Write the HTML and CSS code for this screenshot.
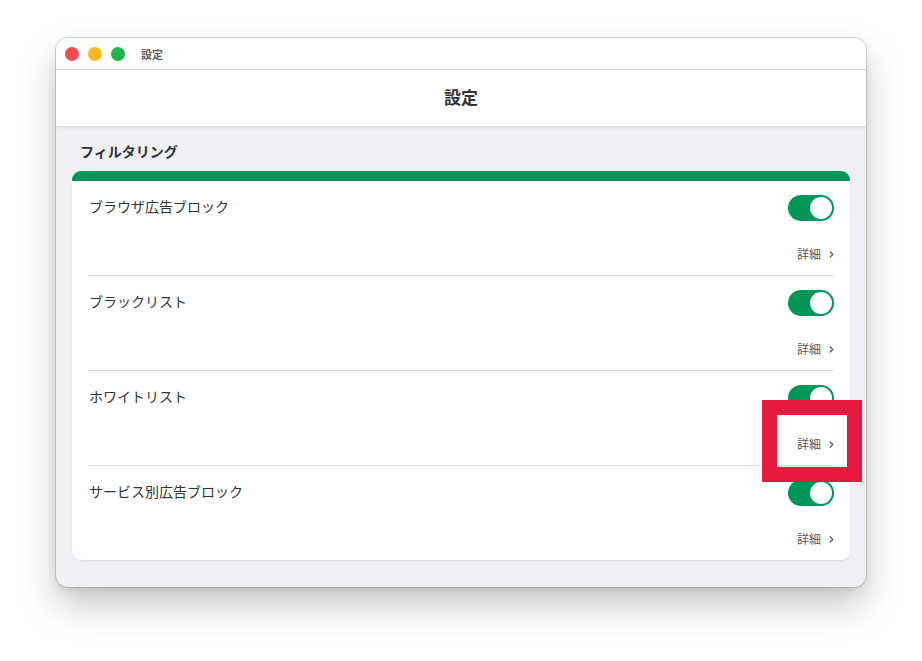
FILE: index.html
```html
<!DOCTYPE html>
<html lang="ja">
<head>
<meta charset="utf-8">
<title>設定</title>
<link rel="stylesheet" href="styles.css">
</head>
<body>
<div class="window">
  <div class="titlebar">
    <div class="lights">
      <span class="light red"></span>
      <span class="light yellow"></span>
      <span class="light green"></span>
    </div>
    <span class="wintitle">設定</span>
  </div>
  <div class="header">設定</div>
  <div class="content">
    <div class="section-title">フィルタリング</div>
    <div class="card">
      <div class="row">
        <div class="row-top">
          <span class="label">ブラウザ広告ブロック</span>
          <span class="toggle"><span class="knob"></span></span>
        </div>
        <div class="detail">詳細<svg class="chev" width="5" height="7" viewBox="0 0 5 7"><path d="M1.2 1 L3.8 3.5 L1.2 6" fill="none" stroke="#555" stroke-width="1.2" stroke-linecap="round" stroke-linejoin="round"/></svg></div>
      </div>
      <div class="row">
        <div class="row-top">
          <span class="label">ブラックリスト</span>
          <span class="toggle"><span class="knob"></span></span>
        </div>
        <div class="detail">詳細<svg class="chev" width="5" height="7" viewBox="0 0 5 7"><path d="M1.2 1 L3.8 3.5 L1.2 6" fill="none" stroke="#555" stroke-width="1.2" stroke-linecap="round" stroke-linejoin="round"/></svg></div>
      </div>
      <div class="row">
        <div class="row-top">
          <span class="label">ホワイトリスト</span>
          <span class="toggle"><span class="knob"></span></span>
        </div>
        <div class="detail">詳細<svg class="chev" width="5" height="7" viewBox="0 0 5 7"><path d="M1.2 1 L3.8 3.5 L1.2 6" fill="none" stroke="#555" stroke-width="1.2" stroke-linecap="round" stroke-linejoin="round"/></svg></div>
      </div>
      <div class="row">
        <div class="row-top">
          <span class="label">サービス別広告ブロック</span>
          <span class="toggle"><span class="knob"></span></span>
        </div>
        <div class="detail">詳細<svg class="chev" width="5" height="7" viewBox="0 0 5 7"><path d="M1.2 1 L3.8 3.5 L1.2 6" fill="none" stroke="#555" stroke-width="1.2" stroke-linecap="round" stroke-linejoin="round"/></svg></div>
      </div>
    </div>
  </div>
</div>
<div class="highlight"></div>
</body>
</html>
```
FILE: styles.css
```css
* { box-sizing: border-box; }
html, body { margin: 0; background: #ffffff; }
body {
  padding: 38px 56px;
  font-family: "Noto Sans CJK JP", "Noto Sans", sans-serif;
  color: #333;
  position: relative;
  width: 922px;
  height: 661px;
  overflow: hidden;
}
.window {
  width: 810px;
  border-radius: 12px;
  overflow: hidden;
  background: #efeff4;
  box-shadow: 0 0 0 1px rgba(0,0,0,0.14), 0 18px 36px rgba(0,0,0,0.22), 0 4px 10px rgba(0,0,0,0.08);
}
.titlebar {
  height: 32px;
  background: #fff;
  border-bottom: 1px solid #dcdcdc;
  display: flex;
  align-items: center;
  padding-left: 9px;
}
.lights { display: flex; gap: 9px; }
.light {
  width: 14px; height: 14px; border-radius: 50%;
  display: block;
}
.red { background: #f5484f; }
.yellow { background: #f9b927; }
.green { background: #1bb74a; }
.wintitle {
  margin-left: 16px;
  font-size: 11px;
  font-weight: 700;
  color: #5a5a5a;
  line-height: 1;
  padding-top: 1px;
}
.header {
  height: 56px;
  background: #fff;
  display: flex;
  align-items: center;
  justify-content: center;
  font-size: 17px;
  font-weight: 700;
  color: #333;
  padding-bottom: 4px;
  box-shadow: 0 1px 3px rgba(0,0,0,0.12);
}
.content {
  padding: 15px 16px 27px;
}
.section-title {
  font-size: 14px;
  font-weight: 700;
  line-height: 20px;
  padding-left: 8px;
  margin-bottom: 10px;
  color: #333;
}
.card {
  background: #fff;
  border-radius: 9px;
  border-top: 10px solid #00965a;
  padding: 0 16px;
  box-shadow: 0 1px 2px rgba(0,0,0,0.07);
}
.row {
  padding: 14px 0 12px;
  border-bottom: 1px solid #dedede;
}
.row:last-child { border-bottom: none; }
.row-top {
  display: flex;
  justify-content: space-between;
  align-items: center;
  height: 26px;
}
.label {
  font-size: 14px;
  color: #333;
  padding-left: 1px;
  padding-bottom: 4px;
}
.toggle {
  width: 46px;
  height: 26px;
  border-radius: 13px;
  background: #00965a;
  position: relative;
  display: block;
}
.knob {
  position: absolute;
  right: 2px;
  top: 2px;
  width: 22px;
  height: 22px;
  border-radius: 50%;
  background: #fff;
}
.detail {
  margin-top: 22px;
  height: 20px;
  display: flex;
  align-items: center;
  justify-content: flex-end;
  font-size: 12px;
  color: #555;
}
.chev { margin-left: 8px; margin-top: 3px; }
.highlight {
  position: absolute;
  left: 762px;
  top: 400px;
  width: 100px;
  height: 82px;
  border: 15px solid #e8193f;
}
```
